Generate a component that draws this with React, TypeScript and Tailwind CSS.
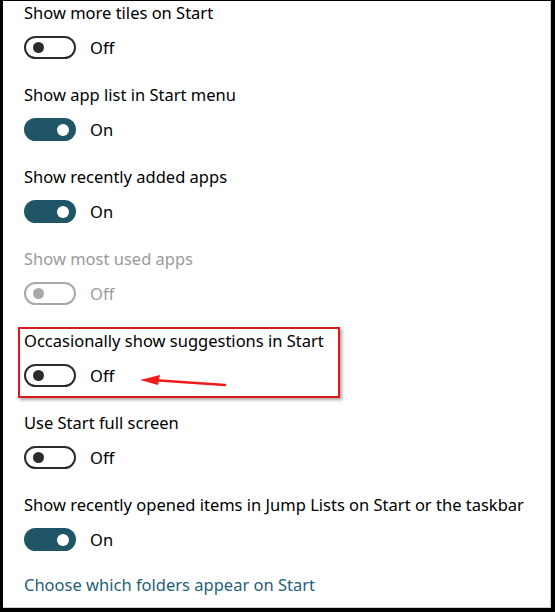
import React from 'react';

type Row = { label: string; on: boolean; disabled?: boolean; highlight?: boolean };

const rows: Row[] = [
  { label: 'Show more tiles on Start', on: false },
  { label: 'Show app list in Start menu', on: true },
  { label: 'Show recently added apps', on: true },
  { label: 'Show most used apps', on: false, disabled: true },
  { label: 'Occasionally show suggestions in Start', on: false, highlight: true },
  { label: 'Use Start full screen', on: false },
  { label: 'Show recently opened items in Jump Lists on Start or the taskbar', on: true },
];

const Toggle = ({ on, disabled }: { on: boolean; disabled?: boolean }) => {
  if (on) {
    return (
      <div className="w-[52px] h-[23px] rounded-full bg-[#1f5567] flex items-center justify-end pr-[7px]">
        <div className="w-[12px] h-[12px] rounded-full bg-white" />
      </div>
    );
  }
  return (
    <div
      className={`w-[52px] h-[23px] rounded-full border-2 flex items-center pl-[7px] ${
        disabled ? 'border-[#a8a8a8]' : 'border-[#2b2b2b]'
      }`}
    >
      <div className={`w-[11px] h-[11px] rounded-full ${disabled ? 'bg-[#a8a8a8]' : 'bg-[#2b2b2b]'}`} />
    </div>
  );
};

const SettingRow = ({ row }: { row: Row }) => (
  <div className="relative">
    <div className={`h-6 leading-6 ${row.disabled ? 'text-[#9a9a9a]' : 'text-black'}`}>{row.label}</div>
    <div className="mt-[11px] h-[23px] flex items-center gap-[14px]">
      <Toggle on={row.on} disabled={row.disabled} />
      <span className={`leading-6 ${row.disabled ? 'text-[#9a9a9a]' : 'text-black'}`}>{row.on ? 'On' : 'Off'}</span>
    </div>
    {row.highlight && (
      <>
        <div className="absolute -left-[6px] -top-[2px] w-[322px] h-[71px] border-2 border-[#e0161b] shadow-[2px_2px_3px_rgba(0,0,0,0.35)]" />
        <svg className="absolute left-[114px] top-[45px]" width="90" height="14" viewBox="0 0 90 14">
          <line x1="14" y1="6" x2="87" y2="11" stroke="#ee1c1c" strokeWidth="2.5" strokeLinecap="round" />
          <polygon points="2,6 22,1 20,11" fill="#ee1c1c" />
        </svg>
      </>
    )}
  </div>
);

export default function App() {
  return (
    <div className="w-[555px] h-[612px] bg-black pl-[3px] pt-px pr-[4px] pb-[4px]">
      <div
        className="h-full bg-white border-r border-b border-[#cfcfcf] pl-[21px] flex flex-col gap-6 text-[16.5px]"
        style={{ fontFamily: '"Noto Sans", "Open Sans", sans-serif' }}
      >
        {rows.map((r, i) => (
          <SettingRow key={i} row={r} />
        ))}
        <div className="-mt-[2px] h-6 leading-6 text-[#1f6079]">Choose which folders appear on Start</div>
      </div>
    </div>
  );
}
